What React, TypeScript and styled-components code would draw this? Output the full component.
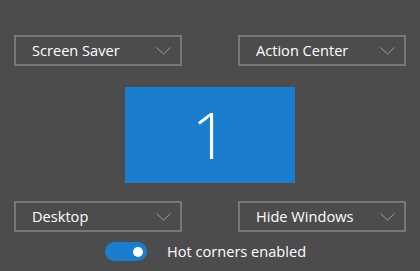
import React, { useState } from "react";
import styled, { createGlobalStyle } from "styled-components";

const Global = createGlobalStyle`
  html, body { margin: 0; padding: 0; background: #4c4c4c; }
  body { font-family: "Open Sans", "Noto Sans", sans-serif; color: #fff; }
  * { box-sizing: border-box; }
`;

const Page = styled.div`
  width: 420px;
  height: 271px;
  background: #4c4c4c;
  padding: 35px 14px 0 14px;
  display: flex;
  flex-direction: column;
`;

const Row = styled.div`
  display: flex;
  justify-content: space-between;
`;

const Combo = styled.div`
  width: 168px;
  height: 31px;
  border: 2px solid #787878;
  display: flex;
  align-items: center;
  justify-content: space-between;
  padding: 0 9px 0 16px;
  font-size: 14.6px;
  color: #fff;
`;

const Label = styled.span`
  line-height: 1;
  margin-top: -1px;
`;

const Monitor = styled.div`
  align-self: center;
  width: 170px;
  height: 96px;
  margin: 21px 0 18px;
  background: #1b7dcd;
  display: flex;
  align-items: center;
  justify-content: center;
  font-size: 64px;
  font-weight: 300;
  line-height: 1;
  color: #fff;
`;

const ToggleRow = styled.div`
  display: flex;
  align-items: center;
  gap: 20px;
  margin-top: 10px;
  padding-left: 91px;
`;

const Track = styled.button<{ $on: boolean }>`
  width: 42px;
  height: 19px;
  border-radius: 10px;
  border: none;
  padding: 0 4px;
  background: ${(p) => (p.$on ? "#1b7dcd" : "#777")};
  display: flex;
  align-items: center;
  justify-content: ${(p) => (p.$on ? "flex-end" : "flex-start")};
  cursor: pointer;
`;

const Knob = styled.span`
  width: 10px;
  height: 10px;
  border-radius: 50%;
  background: #fff;
`;

const ToggleText = styled.span`
  font-size: 14.6px;
  color: #fff;
  line-height: 1;
`;

const Chevron = () => (
  <svg width="15" height="8" viewBox="0 0 15 8">
    <polyline points="0.5,0.5 7.5,7 14.5,0.5" fill="none" stroke="#9a9a9a" strokeWidth="1" />
  </svg>
);

const Dropdown = ({ label }: { label: string }) => (
  <Combo>
    <Label>{label}</Label>
    <Chevron />
  </Combo>
);

export default function App() {
  const [on, setOn] = useState(true);
  return (
    <>
      <Global />
      <Page>
        <Row>
          <Dropdown label="Screen Saver" />
          <Dropdown label="Action Center" />
        </Row>
        <Monitor>1</Monitor>
        <Row>
          <Dropdown label="Desktop" />
          <Dropdown label="Hide Windows" />
        </Row>
        <ToggleRow>
          <Track $on={on} onClick={() => setOn(!on)}>
            <Knob />
          </Track>
          <ToggleText>Hot corners enabled</ToggleText>
        </ToggleRow>
      </Page>
    </>
  );
}
